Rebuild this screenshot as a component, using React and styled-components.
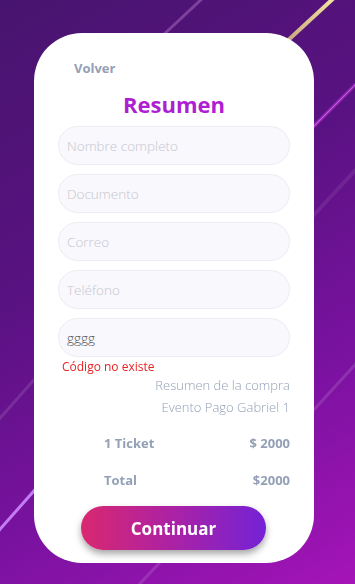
import styled, { createGlobalStyle } from 'styled-components';

const GlobalStyle = createGlobalStyle`
  * { box-sizing: border-box; }
  html, body {
    margin: 0;
    padding: 0;
    min-height: 100%;
  }
  body {
    font-family: "Open Sans", "Noto Sans", sans-serif;
    background: linear-gradient(150deg, #47146e 0%, #5a1282 40%, #7a12a0 70%, #a514b8 100%);
    min-height: 584px;
    overflow: hidden;
  }
`;

export default function App() {
  return (
    <>
      <GlobalStyle />
      <BackgroundLines />
      <SPage>
        <SCard>
          <SBack>Volver</SBack>
          <STitle>Resumen</STitle>
          <SForm>
            <SInput placeholder="Nombre completo" />
            <SInput placeholder="Documento" />
            <SInput placeholder="Correo" />
            <SInput placeholder="Teléfono" />
            <SInput defaultValue="gggg" spellCheck={false} />
          </SForm>
          <SError>Código no existe</SError>
          <SSummary>
            <SSummaryLine>Resumen de la compra</SSummaryLine>
            <SSummaryLine>Evento Pago Gabriel 1</SSummaryLine>
          </SSummary>
          <SRow $top={16}>
            <span>1 Ticket</span>
            <span>$ 2000</span>
          </SRow>
          <SRow $top={19}>
            <span>Total</span>
            <span>$2000</span>
          </SRow>
          <SButton>Continuar</SButton>
        </SCard>
      </SPage>
    </>
  );
}

function BackgroundLines() {
  return (
    <SLines viewBox="0 0 355 584" preserveAspectRatio="none">
      <defs>
        <linearGradient id="gold" x1="0" y1="1" x2="1" y2="0">
          <stop offset="0" stopColor="#c6a37e" />
          <stop offset="1" stopColor="#f6e7a2" />
        </linearGradient>
      </defs>
      <line x1="160" y1="38" x2="205" y2="-4" stroke="rgba(220,150,230,0.35)" strokeWidth="3" />
      <line x1="284" y1="44" x2="336" y2="-4" stroke="url(#gold)" strokeWidth="4" />
      <line x1="300" y1="140" x2="362" y2="78" stroke="rgba(200,70,230,0.35)" strokeWidth="4" />
      <line x1="300" y1="140" x2="362" y2="78" stroke="#cc50ea" strokeWidth="1.2" />
      <line x1="300" y1="230" x2="362" y2="163" stroke="rgba(255,255,255,0.08)" strokeWidth="4" />
      <line x1="300" y1="425" x2="362" y2="357" stroke="rgba(255,255,255,0.13)" strokeWidth="3" />
      <line x1="-5" y1="424" x2="40" y2="373" stroke="rgba(255,255,255,0.12)" strokeWidth="3" />
      <line x1="-5" y1="535" x2="40" y2="484" stroke="#c47cf5" strokeWidth="3" />
      <line x1="132" y1="592" x2="168" y2="554" stroke="rgba(255,255,255,0.13)" strokeWidth="3" />
    </SLines>
  );
}

const SLines = styled.svg`
  position: fixed;
  top: 0;
  left: 0;
  width: 355px;
  height: 584px;
  z-index: 0;
`;

const SPage = styled.div`
  position: relative;
  z-index: 1;
  padding: 33px 0 0 34px;
`;

const SCard = styled.div`
  width: 280px;
  height: 530px;
  background: #fff;
  border-radius: 48px;
  padding: 26px 24px 0 24px;
  display: flex;
  flex-direction: column;
`;

const SBack = styled.div`
  margin-left: 16px;
  font-size: 13px;
  font-weight: 700;
  color: #94a0b6;
  line-height: 18px;
`;

const STitle = styled.h1`
  margin: 14px 0 0;
  text-align: center;
  font-size: 22px;
  font-weight: 700;
  color: #ae1fd2;
  line-height: 26px;
`;

const SForm = styled.div`
  margin-top: 9px;
  display: flex;
  flex-direction: column;
  gap: 9px;
`;

const SInput = styled.input`
  width: 232px;
  height: 39px;
  border-radius: 20px;
  border: 1px solid #ececf4;
  background: #f8f8fd;
  padding: 0 8px;
  font-family: "Open Sans", "Noto Sans", sans-serif;
  font-size: 13.5px;
  font-weight: 300;
  color: #555;
  outline: none;

  &::placeholder {
    color: #c6c6cf;
  }
`;

const SError = styled.div`
  margin: 1px 0 0 4px;
  font-size: 12px;
  color: #e82323;
  line-height: 18px;
`;

const SSummary = styled.div`
  display: flex;
  flex-direction: column;
  align-items: flex-end;
  margin-top: -2px;
`;

const SSummaryLine = styled.div`
  font-size: 13px;
  font-weight: 300;
  color: #94a0b6;
  line-height: 22px;
`;

const SRow = styled.div`
  margin-top: ${p => p.$top}px;
  padding-left: 46px;
  display: flex;
  justify-content: space-between;
  font-size: 13px;
  font-weight: 700;
  color: #94a0b6;
  line-height: 18px;
`;

const SButton = styled.button`
  margin: 17px 0 0 23px;
  width: 185px;
  height: 44px;
  border: none;
  border-radius: 22px;
  background: linear-gradient(90deg, #d9286f 0%, #b022a0 45%, #7422d6 100%);
  box-shadow: 0 4px 7px rgba(0, 0, 0, 0.35);
  color: #fff;
  font-family: "Open Sans", "Noto Sans", sans-serif;
  font-size: 17px;
  font-weight: 700;
`;
